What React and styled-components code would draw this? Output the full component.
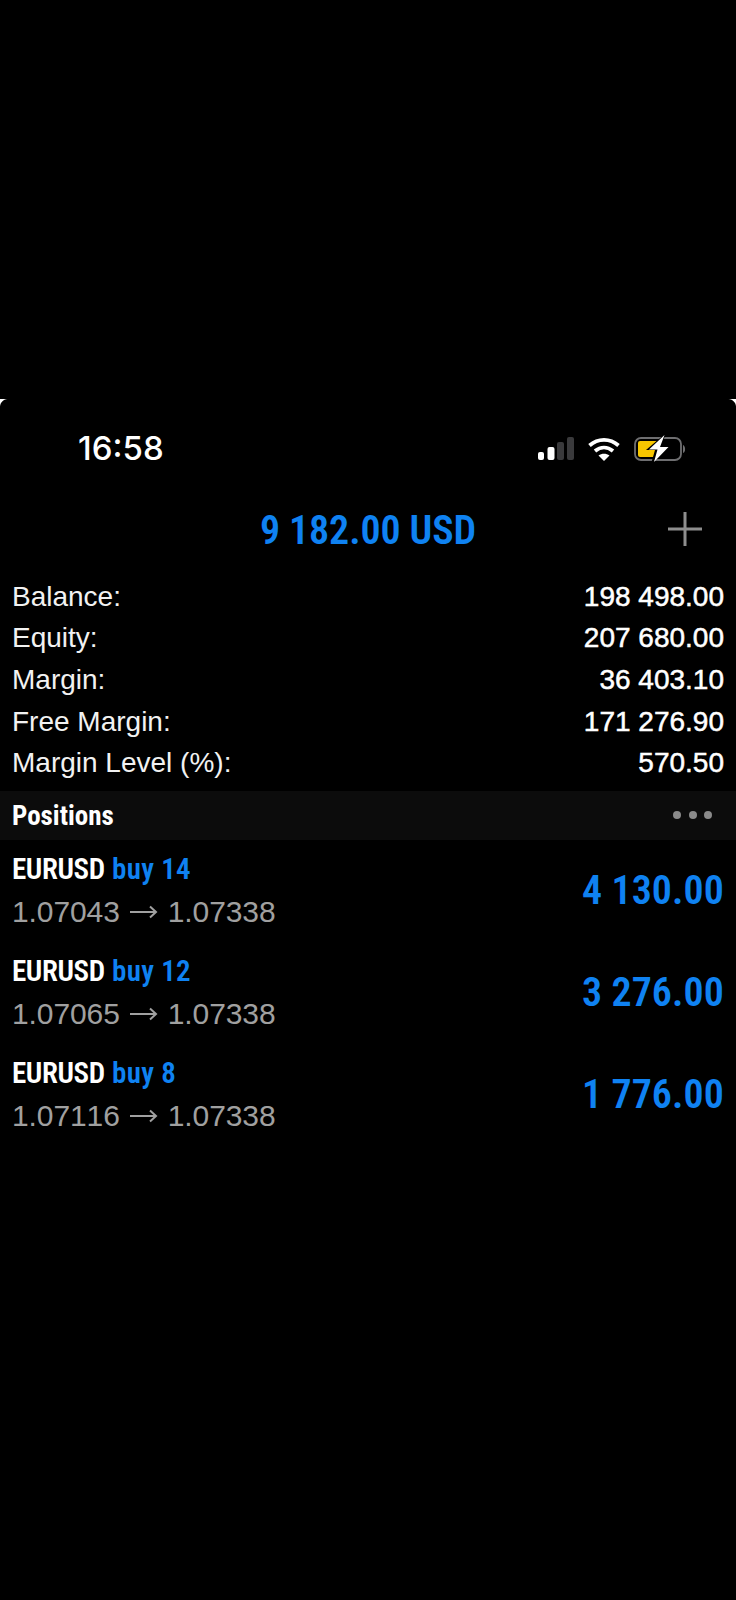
import React from 'react';
import styled, { createGlobalStyle } from 'styled-components';

const summary = [
  ['Balance:', '198 498.00'],
  ['Equity:', '207 680.00'],
  ['Margin:', '36 403.10'],
  ['Free Margin:', '171 276.90'],
  ['Margin Level (%):', '570.50'],
];

const positions = [
  { lots: 14, open: '1.07043', profit: '4 130.00' },
  { lots: 12, open: '1.07065', profit: '3 276.00' },
  { lots: 8, open: '1.07116', profit: '1 776.00' },
];

const App = () => (
  <Page>
    <GlobalStyle />
    <Screen>
      <Corner />
      <Corner $right />
      <StatusBar>
        <Clock>16:58</Clock>
        <StatusIcons>
          <svg width="37" height="24" viewBox="0 0 37 24">
            <rect x="1" y="15" width="6" height="8" rx="2" fill="#fff" />
            <rect x="10.500" y="10" width="7" height="13" rx="2" fill="#fff" />
            <rect x="20" y="5" width="7" height="18" rx="2" fill="#3a3a3c" />
            <rect x="30" y="0" width="7" height="23" rx="2" fill="#3a3a3c" />
          </svg>
          <svg width="32" height="24" viewBox="0 0 32 24" fill="none" stroke="#fff" strokeWidth="3.8">
            <path d="M1.500 8.500C10 1 22 1 30.500 8.500" />
            <path d="M7 14C12.500 9.500 19.500 9.500 25 14" />
            <path d="M16 24l-5.500-5.500c3.300-2.400 7.700-2.400 11 0z" fill="#fff" stroke="none" />
          </svg>
          <svg width="52" height="28" viewBox="0 0 52 28">
            <rect x="1" y="3" width="46" height="22" rx="6" fill="none" stroke="#6e6e70" strokeWidth="1.8" />
            <path d="M4 8a2 2 0 0 1 2-2h18v16H6a2 2 0 0 1-2-2z" fill="#f7c600" />
            <path d="M49 10c2.500 .5 3 7.500 0 8z" fill="#6e6e70" />
            <path d="M32 -2L12 15h9l-4 14 19-18.500h-8.500z" fill="#000" />
            <path d="M30.500 0L15 14.500h8.500l-3.500 12.500 14.500-15h-8.500z" fill="#fff" />
          </svg>
        </StatusIcons>
      </StatusBar>

      <Header>
        <Total>9 182.00 USD</Total>
        <AddButton>
          <svg width="34" height="34" viewBox="0 0 34 34" stroke="#8e8e8e" strokeWidth="3">
            <path d="M17 0v34M0 17h34" />
          </svg>
        </AddButton>
      </Header>

      <Summary>
        {summary.map(([label, value]) => (
          <SummaryRow key={label}>
            <span>{label}</span>
            <SummaryValue>{value}</SummaryValue>
          </SummaryRow>
        ))}
      </Summary>

      <SectionBar>
        <SectionTitle>Positions</SectionTitle>
        <Dots>
          <i />
          <i />
          <i />
        </Dots>
      </SectionBar>

      {positions.map((p) => (
        <PositionRow key={p.open}>
          <div>
            <PositionTitle>
              EURUSD <Side>buy {p.lots}</Side>
            </PositionTitle>
            <Prices>
              {p.open}
              <ArrowIcon width="28" height="14" viewBox="0 0 28 14" fill="none" stroke="#a0a0a0" strokeWidth="2">
                <path d="M0 7h26M20 1.500l6 5.500-6 5.500" />
              </ArrowIcon>
              1.07338
            </Prices>
          </div>
          <Profit>{p.profit}</Profit>
        </PositionRow>
      ))}
    </Screen>
  </Page>
);

export default App;

const narrow = `"Roboto Condensed", "Liberation Sans Narrow", "Liberation Sans", sans-serif`;

const GlobalStyle = createGlobalStyle`
  html, body {
    margin: 0;
    background: #000;
  }
  body {
    font-family: "Liberation Sans", Arial, sans-serif;
  }
`;

const Page = styled.div`
  width: 736px;
  height: 1600px;
  padding-top: 399px;
  box-sizing: border-box;
  background: #000;
  overflow: hidden;
`;

const Screen = styled.div`
  position: relative;
  color: #fff;
`;

const Corner = styled.div`
  position: absolute;
  top: 0;
  ${(p) => (p.$right ? 'right: 0;' : 'left: 0;')}
  width: 8px;
  height: 8px;
  background: radial-gradient(circle at ${(p) => (p.$right ? '0' : '100%')} 100%, transparent 7.500px, #fff 8.500px);
`;

const StatusBar = styled.div`
  height: 100px;
  padding: 0 50px 0 78px;
  display: flex;
  align-items: center;
  justify-content: space-between;
`;

const Clock = styled.div`
  font-family: Inter, sans-serif;
  font-size: 33px;
  font-weight: 500;
  margin-top: -2px;
`;

const StatusIcons = styled.div`
  display: flex;
  align-items: center;
  gap: 14px;
`;

const Header = styled.div`
  position: relative;
  height: 62px;
  display: flex;
  align-items: center;
  justify-content: center;
`;

const Total = styled.div`
  font-family: ${narrow};
  font-size: 40px;
  font-weight: 600;
  letter-spacing: -0.1px;
  color: #0f82f2;
`;

const AddButton = styled.div`
  position: absolute;
  right: 34px;
  top: 13px;
  line-height: 0;
`;

const Summary = styled.div`
  padding: 15px 12px 7px;
`;

const SummaryRow = styled.div`
  height: 41.600px;
  display: flex;
  align-items: center;
  justify-content: space-between;
  font-size: 28px;
  color: #f2f2f2;
`;

const SummaryValue = styled.span`
  -webkit-text-stroke: 0.5px #fff;
  color: #fff;
`;

const SectionBar = styled.div`
  height: 49px;
  padding: 2px 12px 0;
  box-sizing: border-box;
  background: #0c0c0c;
  display: flex;
  align-items: center;
  justify-content: space-between;
`;

const SectionTitle = styled.div`
  font-family: ${narrow};
  font-size: 27px;
  font-weight: 700;
`;

const Dots = styled.div`
  display: flex;
  gap: 7.500px;
  padding-right: 12px;
  margin-top: -2px;

  i {
    width: 8px;
    height: 8px;
    border-radius: 50%;
    background: #8a8a8a;
  }
`;

const PositionRow = styled.div`
  height: 102px;
  padding: 0 12px;
  box-sizing: border-box;
  display: flex;
  align-items: center;
  justify-content: space-between;
`;

const PositionTitle = styled.div`
  font-family: ${narrow};
  font-size: 29px;
  font-weight: 600;
  letter-spacing: -0.4px;
  line-height: 42px;
`;

const Side = styled.span`
  color: #0f82f2;
  letter-spacing: 0.3px;
  margin-left: 1px;
`;

const Prices = styled.div`
  font-size: 30px;
  font-kerning: none;
  letter-spacing: -0.1px;
  line-height: 44px;
  color: #a0a0a0;
  display: flex;
  align-items: center;
`;

const ArrowIcon = styled.svg`
  margin: 0 10px;
`;

const Profit = styled.div`
  font-family: ${narrow};
  font-size: 40px;
  font-weight: 600;
  letter-spacing: 0.1px;
  color: #0f82f2;
`;
